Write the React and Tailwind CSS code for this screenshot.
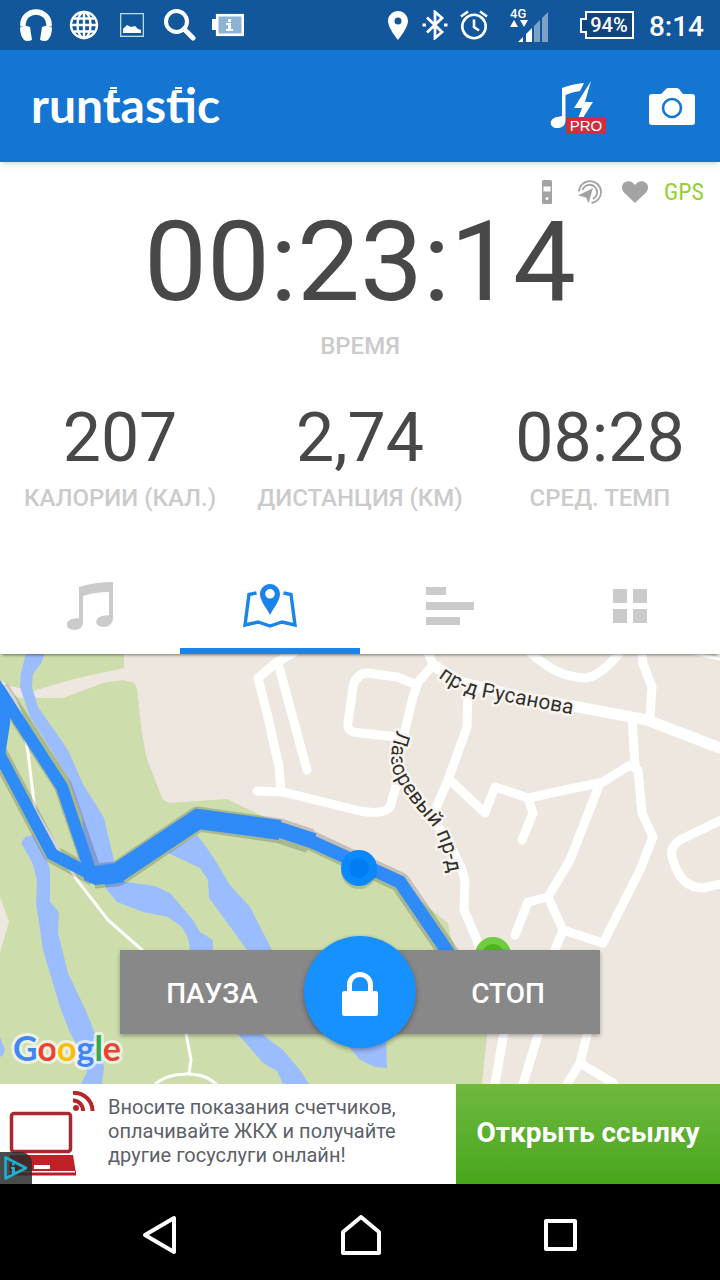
const stats = [
  { value: "207", label: "КАЛОРИИ (КАЛ.)" },
  { value: "2,74", label: "ДИСТАНЦИЯ (КМ)" },
  { value: "08:28", label: "СРЕД. ТЕМП" },
]

function StatusBar() {
  return (
    <div className="flex h-[50px] items-center justify-between bg-[#12569b] pl-3 pr-4 text-white">
      <div className="flex items-center">
        <span className="flex w-12 justify-center">
          <svg width="34" height="34" viewBox="0 0 34 34" fill="currentColor">
            <path d="M4 18.500V16a13 12 0 0 1 26 0v2.500" fill="none" stroke="currentColor" strokeWidth="5.500" />
            <path d="M2 19q5-2 9 0l2 13q-5 2-8 0Q1 27 1 20zM32 19q-5-2-9 0l-2 13q5 2 8 0Q33 27 33 20z" />
          </svg>
        </span>
        <span className="flex w-12 justify-center">
          <svg width="30" height="30" viewBox="0 0 30 30" fill="none" stroke="currentColor" strokeWidth="2.400">
            <circle cx="15" cy="15" r="13" />
            <ellipse cx="15" cy="15" rx="6.500" ry="13" />
            <path d="M15 2v26M2 15h26M4.500 8.500h21M4.500 21.500h21" />
          </svg>
        </span>
        <span className="flex w-12 justify-center">
          <svg width="24" height="24" viewBox="0 0 24 24" fill="currentColor">
            <rect x=".6" y=".6" width="22.800" height="22.800" fill="none" stroke="#b9d9ee" strokeWidth="1.400" />
            <path d="M3 20v-4l4-4 4 2 4-1 3 3 3 1v3z" />
          </svg>
        </span>
        <span className="flex w-12 justify-center">
          <svg width="32" height="32" viewBox="0 0 32 32" fill="none" stroke="currentColor">
            <circle cx="12.500" cy="12.500" r="10.500" strokeWidth="4" />
            <path d="M20 20l9 9" strokeWidth="5" strokeLinecap="round" />
          </svg>
        </span>
        <span className="flex w-12 justify-center">
          <svg width="32" height="24" viewBox="0 0 32 24" fill="currentColor">
            <path d="M0 6h5v11H0z" />
            <rect x="5.200" y="2.200" width="25.600" height="19.600" fill="#8fb3d6" stroke="currentColor" strokeWidth="2.600" />
            <path d="M16 6h3v3h-3zM14 10h5v6h2v2h-7v-2h2v-4h-2z" />
          </svg>
        </span>
      </div>

      <div className="flex items-center">
        <svg width="20" height="29" viewBox="0 0 20 29" fill="currentColor" fillRule="evenodd">
          <path d="M10 0C4.500 0 0 4.500 0 10c0 7 10 19 10 19s10-12 10-19C20 4.500 15.500 0 10 0zm0 6.500a3.500 3.500 0 1 1 0 7 3.500 3.500 0 0 1 0-7z" />
        </svg>
        <svg className="ml-3.5" width="26" height="30" viewBox="0 0 26 30" fill="none" stroke="currentColor" strokeWidth="2.800">
          <path d="M5 7.500L20 22l-7 6V2l7 6L5 22.500" />
          <path d="M.5 15h3.500M22 15h3.500" strokeWidth="3.200" />
        </svg>
        <svg className="ml-3" width="28" height="30" viewBox="0 0 28 30" fill="none" stroke="currentColor" strokeWidth="2.600">
          <circle cx="14" cy="16.500" r="11.700" />
          <path d="M14 9.500v7.500l5 3.500M1 6.500l7-5M27 6.500l-7-5" />
        </svg>
        <span className="ml-[22px] flex">
          <svg width="40" height="36" viewBox="0 0 40 36" fill="currentColor">
            <text x="0" y="11" fontSize="13" fontWeight="500" fontFamily="Roboto, sans-serif">4G</text>
            <path d="M0 20l4-7 4 7zM10 13h8l-4 7z" />
            <path d="M8 35l5-5v5zM16 27l6-6v14h-6z" />
            <path d="M24 19l6-6v22h-6zM32 11l6-6v30h-6z" opacity=".45" />
          </svg>
        </span>
        <span className="relative ml-[30px] flex h-7 w-[54px] items-center justify-center pl-1 text-[20px] font-medium leading-6">
          <svg className="absolute inset-0" width="54" height="28" viewBox="0 0 54 28">
            <path d="M6 1h47v26H6v-6H1V8h5z" fill="#0f447c" stroke="white" strokeWidth="2" />
          </svg>
          <span className="relative">94%</span>
        </span>
        <span className="ml-[15px] pt-1 text-[28px] font-medium leading-8">8:14</span>
      </div>
    </div>
  )
}

function AppBar() {
  return (
    <header className="relative z-10 flex h-28 items-center justify-between bg-[#1475d3] pl-7 pr-6 text-white shadow-md">
      <h1>
        <svg width="204" height="72" viewBox="0 0 204 72" fill="white">
          <text x="3" y="53" fontSize="48" fontWeight="700" fontFamily="Lato, sans-serif">runtastic</text>
          {/* striped tips of the two t's */}
          <path d="M82 17h7v2h-7zM82 20h7v3h-7zM147 17h7v2h-7zM147 20h7v3h-7z" />
        </svg>
      </h1>
      <div className="flex items-center gap-[40px]">
        <button aria-label="Music PRO">
          <svg width="58" height="56" viewBox="0 0 58 56" fill="white">
            <path d="M12 10Q22 6 34 5l-4 8q-8 1-14.500 4v25c0 6-4 8-8 8-9 0-9-10 0-11l4.500-1z" />
            <path d="M41 3L24 30h8l-5 13h4l12-19h-8z" />
            <rect x="16" y="39" width="40" height="17" fill="#d22d3f" />
            <text x="36" y="53" textAnchor="middle" fontSize="15" fontFamily="Liberation Sans, sans-serif">PRO</text>
          </svg>
        </button>
        <button aria-label="Camera">
          <svg width="48" height="38" viewBox="0 0 48 38">
            <path d="M4 7h9l5-5q1-1 2-1h9q1 0 2 1l4 5h9q3 0 3 3v25q0 3-3 3H4q-3 0-3-3V10q0-3 3-3z" fill="white" />
            <circle cx="24" cy="21" r="9" fill="none" stroke="#1475d3" strokeWidth="2.600" />
          </svg>
        </button>
      </div>
    </header>
  )
}

function Session() {
  return (
    <section className="bg-white pb-12 pt-4 text-[#484848]">
      <div className="flex h-7 items-center justify-end pr-4 text-[#a3a3a3]">
        <svg width="10" height="24" viewBox="0 0 10 24">
          <rect width="10" height="24" rx="1.500" fill="currentColor" />
          <rect x="1.500" y="6.500" width="7" height="5" fill="white" />
          <circle cx="5" cy="18.500" r="1.500" fill="white" />
        </svg>
        <svg className="ml-[26px]" width="24" height="24" viewBox="0 0 24 24" fill="none" stroke="currentColor" strokeWidth="1.800">
          <path d="M1 11.500A11 11 0 1 1 13.500 23M4.500 10A7.500 7.500 0 1 1 15 19" />
          <path d="M0 15.500L15 8l-4.500 15.500-2.500-6z" fill="currentColor" stroke="none" />
        </svg>
        <svg className="ml-5" width="26" height="22" viewBox="0 0 26 22" fill="currentColor">
          <path d="M13 22L2.500 12C-1 8.500-.5 4 2 1.800 5-.8 10-.5 13 4c3-4.500 8-4.800 11-2.200 2.500 2.200 3 6.700-.5 10.200z" />
        </svg>
        <span className="ml-4 font-['Roboto_Condensed','Liberation_Sans_Narrow','Roboto',sans-serif] text-[24px] leading-7 text-[#94cf36]">GPS</span>
      </div>

      <div className="text-center">
        <p className="text-[112px] leading-[112px]">00:23:14</p>
        <p className="mt-4 text-[24px] font-medium leading-6 text-[#cbcbcb]">ВРЕМЯ</p>
      </div>

      <div className="mt-11 grid grid-cols-3 text-center">
        {stats.map((s) => (
          <div key={s.label}>
            <p className="text-[68px] leading-[72px]">{s.value}</p>
            <p className="mt-3 whitespace-nowrap text-[24px] font-medium leading-6 text-[#cbcbcb]">{s.label}</p>
          </div>
        ))}
      </div>
    </section>
  )
}

function Tabs() {
  const tab = "flex h-24 items-center justify-center border-b-[6px] pt-1.5"
  return (
    <nav className="relative z-10 grid grid-cols-4 bg-white text-[#cbcbcb] shadow-[0_3px_3px_-2px_rgba(0,0,0,0.5)]">
      <button aria-label="Music" className={tab + " border-transparent"}>
        <svg width="46" height="48" viewBox="0 0 46 48" fill="currentColor">
          <path d="M12 5Q28 0 46 0v36c0 6-5 9-9 9-10 0-10-9-2-11q4-1 7-.5V10Q28 10 16 14v26c0 5-4 8-8 8-11 0-10-9-3-11q4-1 7-.5z" />
        </svg>
      </button>
      <button aria-label="Map" className={tab + " border-[#1b84ea] text-[#1b84ea]"}>
        <svg width="54" height="46" viewBox="0 0 54 46" fill="none" stroke="currentColor" strokeWidth="3.400">
          <path d="M13.500 10L6 11.500 2 42l13-3 12 4 12-4 13 3-4-30.500-7.500-1.500" />
          <path d="M27 1c-5.500 0-10 4.500-10 10 0 7 6 13 10 21 4-8 10-14 10-21 0-5.500-4.500-10-10-10zm0 5a4.800 4.800 0 1 1 0 9.600A4.800 4.800 0 0 1 27 6z" fill="currentColor" fillRule="evenodd" stroke="none" />
        </svg>
      </button>
      <button aria-label="Splits" className={tab + " border-transparent"}>
        <svg width="48" height="38" viewBox="0 0 48 38" fill="currentColor">
          <path d="M0 0h20v8H0zM0 15h48v8H0zM0 30h34v8H0z" />
        </svg>
      </button>
      <button aria-label="More" className={tab + " border-transparent"}>
        <svg width="36" height="36" viewBox="0 0 36 36" fill="currentColor">
          <path d="M1 1h14v14H1zM21 1h14v14H21zM1 21h14v14H1zM21 21h14v14H21z" />
        </svg>
      </button>
    </nav>
  )
}

function MapDrawing() {
  return (
    <svg className="absolute inset-0 h-full w-full" viewBox="0 0 720 430" preserveAspectRatio="xMidYMid slice" fontFamily="Roboto, sans-serif">
      <rect width="720" height="430" fill="#eee7df" />

      {/* park */}
      <g fill="#cddeac">
        <path d="M0 0H124V14L78 24 33 37 10 32 0 26z" />
        <path d="M0 36L20 44 63 44 103 29 123 26 134 29 137 34 142 80 147 105 163 146 170 149 227 145 262 162 330 190 400 230 423 249 448 269 450 280 487 381 482 430H0V298L9 268 0 243z" />
      </g>

      {/* water */}
      <g fill="#9cbdfd">
        <path d="M26 0H44L42 8 33 20 32 33 38 53 68 96 83 130 104 164 114 206 110 228H95L86 206 82 163 68 123 43 83 30 63 20 33 21 18z" />
        <path d="M103 228H127L155 232 170 239 193 266 200 278 213 286V296L262 380 283 396 300 416 309 430H283L277 417 263 409 238 380 190 296 188 284 182 273 168 263 143 258 117 248 107 236z" />
        <path d="M168 199L197 181 207 194 215 206 230 231 250 253 272 296 386 385 387 414 375 413 360 406 350 394 247 296 218 256 209 244 208 226 200 214 183 206z" />
        <path d="M21 189L25 183 33 181 48 209 50 216V248L59 258 58 279 68 319 87 359 100 393 104 413 102 430H81L87 418 80 396 70 379 60 353 43 296 36 249 37 226 32 208z" />
        <path d="M0 383L5 396 3 401 0 403z" />
      </g>

      {/* footpaths */}
      <g fill="none" stroke="white" strokeWidth="3">
        <path d="M5 32L15 46 22 63 28 99 35 156 60 198 77 226 108 266 133 288 142 296 186 379 191 406 189 419M155 430Q167 420 187 420T217 431" />
      </g>

      {/* streets */}
      <g fill="none" stroke="white" strokeWidth="9" strokeLinecap="round" strokeLinejoin="round">
        <path d="M293 -1L277 8 258 24 267 59 279 113 281 138M278 9L307 116M257 137L283 138 360 157Q383 161 390 153L397 129" />
        <path d="M397 83L360 79Q346 78 348 69L353 33Q356 20 367 19L397 23 417 31" />
        <path d="M428 -2L433 11 418 28 413 43 405 76 397 105 400 127 423 155 440 175 452 195 461 213 465 226 464 256 477 286 505 372 495 430" />
        <path d="M468 36L467 73 448 126 435 156M450 126L485 159 495 133 528 144 603 128 630 111 638 116 642 159 653 183 640 216 603 289 563 276 548 243 528 248 515 281" />
        <path d="M548 243L570 206 600 129M528 144L533 159 522 186M632 63L635 111M563 276L555 296 538 381 523 430M587 381L580 409 567 430M580 409L613 429" />
        <path d="M530 -2Q557 24 587 24 603 20 620 -2M642 -2L643 10 652 33 650 64M721 166L680 186Q668 194 673 206 681 234 703 234L721 230" />
        <path d="M693 -1L720 5" strokeWidth="3" />
        <path d="M433 11L460 28 520 43 573 52 647 66 720 94" strokeWidth="11" />
      </g>

      {/* street names */}
      <g fill="#33302c" fontSize="21" stroke="#f8f4ef" strokeWidth="5" strokeLinejoin="round" paintOrder="stroke">
        <path id="rusanova" d="M438 23Q463 42 486 44L580 62" fill="none" stroke="none" />
        <path id="lazorevy" d="M397 76Q388 100 393 117 402 139 428 167 444 184 451 236" fill="none" stroke="none" />
        <text><textPath href="#rusanova">пр-д Русанова</textPath></text>
        <text><textPath href="#lazorevy">Лазоревый пр-д</textPath></text>
      </g>

      {/* route and its shadow */}
      <g fill="none" stroke="black" strokeLinejoin="round" opacity=".17">
        <path d="M0 34L63 132 94 222M-2 98L52 200 94 223" strokeWidth="18" />
        <path d="M94 222L117 220 198 165 280 177 310 187" strokeWidth="25" />
        <path d="M280 176L310 186 359 209 400 228 456 310" strokeWidth="20" />
      </g>
      <g fill="none" stroke="#2f8bf8" strokeLinejoin="miter">
        <path d="M0 26L10 42 10 70 5 102 0 100z" fill="#2f8bf8" stroke="none" />
        <path d="M-2 34L62 133 92 222M-4 94L52 200 96 223" strokeWidth="12" />
        <path d="M84 213L105 211 120 210 124 228 95 231 84 226z" fill="#2f8bf8" stroke="none" />
        <path d="M104 221L117 219 198 165 280 176" strokeWidth="20" />
        <path d="M266 174L280 176 314 187" strokeWidth="16" />
        <path d="M306 185L359 209 400 228 456 310" strokeWidth="13" />
      </g>

      <circle cx="493" cy="301" r="18" fill="#70cc42" />
      <circle cx="493" cy="301" r="11" fill="#4fb622" />
      <circle cx="359" cy="217" r="18" fill="black" opacity=".15" />
      <circle cx="359" cy="214" r="18" fill="#0a89ff" />
      <circle cx="359" cy="214" r="10" fill="#007cf2" />

      <text x="13" y="407" fontSize="34" fontWeight="700" stroke="white" strokeOpacity=".6" strokeWidth="6" strokeLinejoin="round" paintOrder="stroke" fontFamily="Lato, sans-serif">
        <tspan fill="#4285f4">G</tspan>
        <tspan fill="#ea4335">o</tspan>
        <tspan fill="#fbbc05">o</tspan>
        <tspan fill="#4285f4">g</tspan>
        <tspan fill="#34a853">l</tspan>
        <tspan fill="#ea4335">e</tspan>
      </text>
    </svg>
  )
}

function MapPanel() {
  return (
    <main className="relative min-h-80 flex-1 overflow-hidden">
      <MapDrawing />
      <div className="absolute inset-x-0 bottom-[50px] flex justify-center">
        <div className="flex h-[84px] w-2/3 items-center bg-[#888888] text-[28px] font-medium text-white shadow-[0_2px_4px_rgba(0,0,0,0.3)]">
          <button className="h-full flex-1 pt-1">ПАУЗА</button>
          <button aria-label="Lock" className="flex h-28 w-28 shrink-0 items-center justify-center rounded-full bg-[#1791ff] pt-1 shadow-[0_2px_5px_rgba(0,0,0,0.35)]">
            <svg width="36" height="44" viewBox="0 0 36 44">
              <path d="M7.500 20v-7a10.500 10.500 0 0 1 21 0v7" fill="none" stroke="white" strokeWidth="5" />
              <rect y="19" width="36" height="25" rx="2.500" fill="white" />
            </svg>
          </button>
          <button className="h-full flex-1 pt-1">СТОП</button>
        </div>
      </div>
    </main>
  )
}

function AdBanner() {
  return (
    <aside className="relative flex h-[100px] bg-white">
      <svg className="shrink-0" width="108" height="100" viewBox="0 0 108 100">
        <rect x="11.500" y="29.500" width="59" height="38" rx="2.500" fill="none" stroke="#a8282d" strokeWidth="3.500" />
        <path d="M10 71h63l3 19H9z" fill="#c02026" />
        <path d="M9 87h67v4.500H9z" fill="#b31f25" />
        <path d="M34 81h16v4H34zM9 87h66v1.500H9z" fill="white" />
        <circle cx="76" cy="24" r="3" fill="#b5262b" />
        <path d="M73 16.500a10 10 0 0 1 10 10.500M73 9a18 18 0 0 1 19.500 18" fill="none" stroke="#b5262b" strokeWidth="4" />
        <path d="M0 68h22q10 2 10 12v20H0z" fill="#2b2b2b" opacity=".85" />
        <path d="M5.500 73.500L26 84 5.500 94.500z" fill="none" stroke="#1fb0cf" strokeWidth="2.600" strokeLinejoin="round" />
        <path d="M12 79h2.500v2.500H12zM11 83h4v7h-3v-5h-1z" fill="#1fb0cf" />
      </svg>
      <p className="min-w-0 flex-1 py-[11px] text-[20px] leading-6 text-[#5c5f6b]">
        Вносите показания счетчиков, оплачивайте ЖКХ и получайте другие госуслуги онлайн!
      </p>
      <a href="#" className="flex w-[264px] shrink-0 items-center justify-center bg-linear-to-b from-[#6fb93f] to-[#48a61b] pb-0.5 text-[28px] font-bold text-white">
        Открыть ссылку
      </a>
    </aside>
  )
}

function NavBar() {
  return (
    <div className="flex h-24 items-center justify-center gap-[162px] bg-black pt-1.5">
      <button aria-label="Back">
        <svg width="36" height="40" viewBox="0 0 36 40" fill="none" stroke="white" strokeWidth="4" strokeLinejoin="round">
          <path d="M32 3v34L3 20z" />
        </svg>
      </button>
      <button aria-label="Home">
        <svg width="42" height="40" viewBox="0 0 42 40" fill="none" stroke="white" strokeWidth="4" strokeLinejoin="round">
          <path d="M3 17L21 2l18 15v21H3z" />
        </svg>
      </button>
      <button aria-label="Recent apps">
        <svg width="34" height="34" viewBox="0 0 34 34" fill="none" stroke="white" strokeWidth="4" strokeLinejoin="round">
          <path d="M2 3h29v28H2z" />
        </svg>
      </button>
    </div>
  )
}

export default function App() {
  return (
    <div className="flex min-h-screen flex-col bg-white font-['Roboto',sans-serif]">
      <StatusBar />
      <AppBar />
      <Session />
      <Tabs />
      <MapPanel />
      <AdBanner />
      <NavBar />
    </div>
  )
}
